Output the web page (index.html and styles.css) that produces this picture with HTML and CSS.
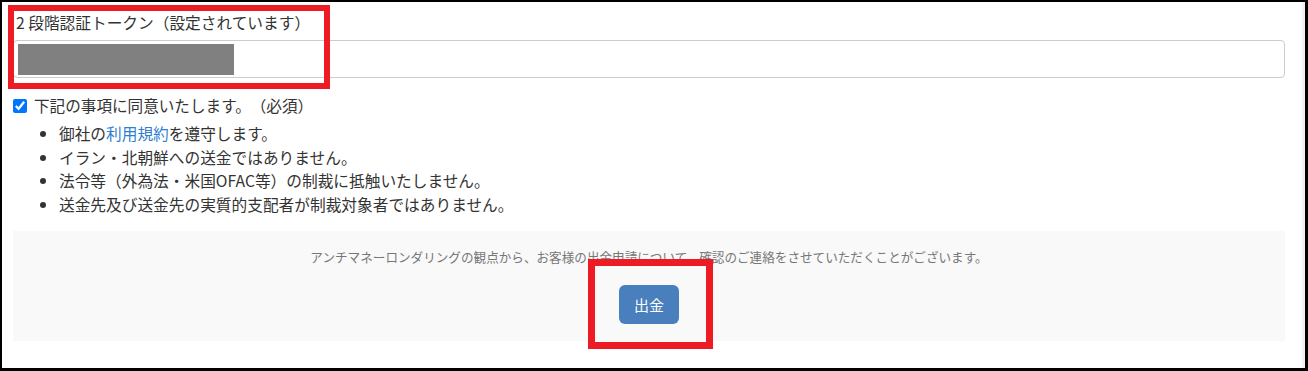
FILE: index.html
```html
<!DOCTYPE html>
<html lang="ja">
<head>
    <meta charset="UTF-8">
    <meta name="viewport" content="width=device-width, initial-scale=1.0">
    <title>出金申請</title>
    <link rel="stylesheet" href="styles.css">
</head>
<body>
    <div class="frame">
        <div class="page">
            <form class="withdraw-form">
                <label class="field-label" for="token">2 段階認証トークン（設定されています）</label>
                <div class="token-input">
                    <span class="masked"></span>
                </div>

                <label class="agree">
                    <input type="checkbox" checked>
                    <span>下記の事項に同意いたします。（必須）</span>
                </label>
                <ul class="terms">
                    <li>御社の<a href="#">利用規約</a>を遵守します。</li>
                    <li>イラン・北朝鮮への送金ではありません。</li>
                    <li>法令等（外為法・米国OFAC等）の制裁に抵触いたしません。</li>
                    <li>送金先及び送金先の実質的支配者が制裁対象者ではありません。</li>
                </ul>

                <div class="submit-panel">
                    <p class="notice">アンチマネーロンダリングの観点から、お客様の出金申請について、確認のご連絡をさせていただくことがございます。</p>
                    <button type="submit">出金</button>
                </div>
            </form>
        </div>

        <!-- annotation boxes -->
        <div class="mark mark-token"></div>
        <div class="mark mark-button"></div>
    </div>
</body>
</html>
```

FILE: styles.css
```css
html, body {
    margin: 0;
    padding: 0;
}
body {
    font-family: "Noto Sans CJK JP", "Noto Sans", sans-serif;
    color: #333;
    background: #fff;
    text-spacing-trim: space-all;
}
.frame {
    position: relative;
    width: 1308px;
    height: 371px;
    box-sizing: border-box;
    border: 2px solid #000;
    border-right-width: 3px;
    border-bottom-width: 3px;
}
.page {
    height: 100%;
    box-sizing: border-box;
    padding: 10px 17px 0 11px;
    border-right: 3px solid #f2f2f2;
}
.field-label {
    display: block;
    font-size: 15.7px;
    line-height: 21px;
    margin-left: 3px;
    margin-bottom: 7px;
}
.token-input {
    height: 38px;
    box-sizing: border-box;
    border: 1px solid #ccc;
    border-radius: 4px;
    padding: 3px 4px;
}
.masked {
    display: block;
    width: 216px;
    height: 31px;
    background: #808080;
}
.agree {
    display: flex;
    align-items: center;
    gap: 7px;
    margin-top: 17px;
    font-size: 15.6px;
    line-height: 21px;
}
.agree input {
    margin: 0;
    width: 14px;
    height: 14px;
}
.terms {
    margin: 6px 0 0 0;
    padding-left: 46px;
    font-size: 15.7px;
    line-height: 23.5px;
}
.terms a {
    color: #2f7fd0;
    text-decoration: none;
}
.submit-panel {
    margin-top: 15px;
    height: 110px;
    box-sizing: border-box;
    background: #f9f9f9;
    padding-top: 17px;
    text-align: center;
}
.notice {
    margin: 0;
    font-size: 12.6px;
    line-height: 18px;
    color: #777;
}
button {
    margin-top: 19px;
    height: 39px;
    padding: 0 15px;
    border: none;
    border-radius: 6px;
    background: #4a7fbe;
    color: #fff;
    font-family: inherit;
    font-size: 15px;
    cursor: pointer;
}
.mark {
    position: absolute;
    border: 6px solid #ed1c24;
    box-sizing: border-box;
}
.mark-token {
    left: 6px;
    top: 3px;
    width: 322px;
    height: 84px;
}
.mark-button {
    left: 586px;
    top: 257px;
    width: 125px;
    height: 90px;
    border-width: 7px;
}
```
